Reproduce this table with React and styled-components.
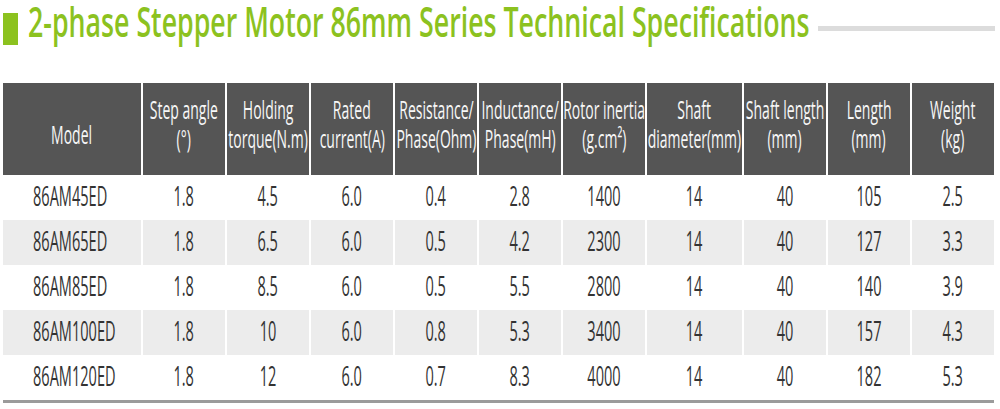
import React from "react";
import styled, { createGlobalStyle } from "styled-components";

const GlobalStyle = createGlobalStyle`
	body {
		margin: 0;
		overflow: hidden;
		background: #fff;
		font-family: "Open Sans", "Noto Sans", sans-serif;
	}
`;

const GREEN = "#8cc21f";

const Page = styled.div`
	width: 1000px;
	height: 409px;
	box-sizing: border-box;
	padding-left: 3px;
	background: #fff;
	overflow: hidden;
`;

const TitleBar = styled.div`
	display: flex;
	align-items: flex-start;
	height: 83px;
`;

const Marker = styled.div`
	flex-shrink: 0;
	width: 15px;
	height: 32px;
	margin-top: 13px;
	background: ${GREEN};
`;

const Heading = styled.h1`
	flex: 1;
	min-width: 0;
	margin: 1px 0 0 10px;
	font-size: 41px;
	line-height: 41px;
	font-weight: 600;
	color: ${GREEN};
	white-space: nowrap;
`;

// the source uses a narrow face, so text is squeezed horizontally
const Squeeze = styled.span`
	display: inline-block;
	white-space: nowrap;
	transform: scaleX(${p => p.$sx});
	transform-origin: ${p => p.$origin || "center"};
`;

const Rule = styled.div`
	flex-shrink: 0;
	width: 177px;
	height: 5px;
	margin: 26px 5px 0 0;
	background: #dcdcdc;
`;

const Table = styled.div`
	width: 991px;
	border-bottom: 3px solid #9b9b9b;
`;

const Row = styled.div`
	display: grid;
	grid-template-columns: 138px repeat(6, 82px) 95px repeat(3, 82px);
	column-gap: 2px;
	height: ${p => (p.$head ? "92px" : "45px")};
`;

const HeadCell = styled.div`
	display: flex;
	flex-direction: column;
	align-items: center;
	justify-content: center;
	box-sizing: border-box;
	padding: ${p => (p.$single ? "10px 0 0" : "0 0 11px")};
	background: #555555;
	color: #f7f7f7;
	font-size: 25px;
	line-height: 29px;
`;

const Cell = styled.div`
	display: flex;
	align-items: center;
	justify-content: ${p => (p.$left ? "flex-start" : "center")};
	box-sizing: border-box;
	padding: 0 0 5px ${p => (p.$left ? "30px" : "0")};
	background: ${p => (p.$shade ? "#ececec" : "transparent")};
	color: #333;
	font-size: 28px;
	line-height: 40px;
`;

const headers = [
	["Model"],
	["Step angle", "(°)"],
	["Holding", "torque(N.m)"],
	["Rated", "current(A)"],
	["Resistance/", "Phase(Ohm)"],
	["Inductance/", "Phase(mH)"],
	["Rotor inertia", "(g.cm²)"],
	["Shaft", "diameter(mm)"],
	["Shaft length", "(mm)"],
	["Length", "(mm)"],
	["Weight", "(kg)"],
];

const rows = [
	["86AM45ED", "1.8", "4.5", "6.0", "0.4", "2.8", "1400", "14", "40", "105", "2.5"],
	["86AM65ED", "1.8", "6.5", "6.0", "0.5", "4.2", "2300", "14", "40", "127", "3.3"],
	["86AM85ED", "1.8", "8.5", "6.0", "0.5", "5.5", "2800", "14", "40", "140", "3.9"],
	["86AM100ED", "1.8", "10", "6.0", "0.8", "5.3", "3400", "14", "40", "157", "4.3"],
	["86AM120ED", "1.8", "12", "6.0", "0.7", "8.3", "4000", "14", "40", "182", "5.3"],
];

export default function App() {
	return (
		<Page>
			<GlobalStyle />
			<TitleBar>
				<Marker />
				<Heading>
					<Squeeze $sx={0.652} $origin="left">
						2-phase Stepper Motor 86mm Series Technical Specifications
					</Squeeze>
				</Heading>
				<Rule />
			</TitleBar>

			<Table>
				<Row $head>
					{headers.map((lines, i) => (
						<HeadCell key={i} $single={lines.length === 1}>
							{lines.map(line => (
								<Squeeze key={line} $sx={0.56}>
									{line}
								</Squeeze>
							))}
						</HeadCell>
					))}
				</Row>
				{rows.map((row, r) => (
					<Row key={row[0]}>
						{row.map((value, c) => (
							<Cell key={c} $left={c === 0} $shade={r % 2 === 1}>
								<Squeeze $sx={0.52} $origin={c === 0 ? "left" : "center"}>
									{value}
								</Squeeze>
							</Cell>
						))}
					</Row>
				))}
			</Table>
		</Page>
	);
}
